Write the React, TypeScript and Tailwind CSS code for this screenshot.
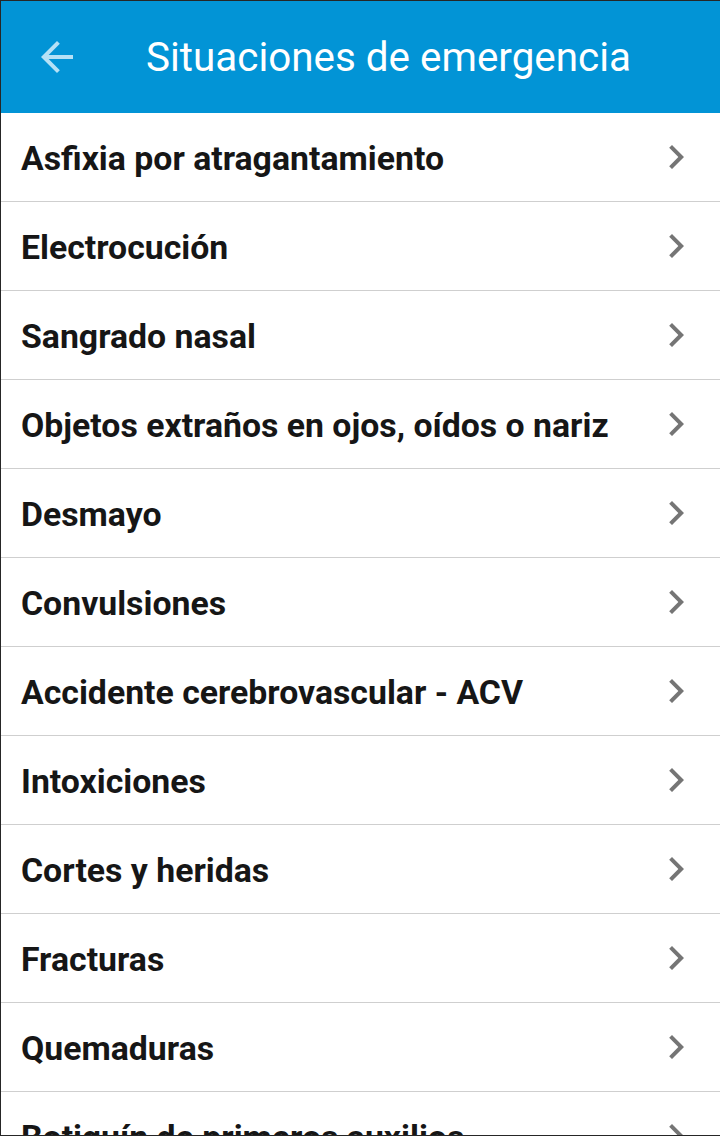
const ITEMS = [
  'Asfixia por atragantamiento',
  'Electrocución',
  'Sangrado nasal',
  'Objetos extraños en ojos, oídos o nariz',
  'Desmayo',
  'Convulsiones',
  'Accidente cerebrovascular - ACV',
  'Intoxiciones',
  'Cortes y heridas',
  'Fracturas',
  'Quemaduras',
  'Botiquín de primeros auxilios',
]

function BackArrow() {
  return (
    <svg viewBox="0 0 24 24" className="w-12 h-12" fill="#b5e1f6">
      <path d="M20 11H7.83l5.59-5.59L12 4l-8 8 8 8 1.41-1.41L7.83 13H20v-2z" />
    </svg>
  )
}

function Chevron() {
  return (
    <svg viewBox="0 0 24 24" className="w-12 h-12 shrink-0" fill="#757575">
      <path d="M10 6L8.59 7.41 13.17 12l-4.58 4.59L10 18l6-6z" />
    </svg>
  )
}

export default function App() {
  return (
    <div
      className="h-[1136px] w-[720px] overflow-hidden bg-white border-t border-b border-l border-[#262626] flex flex-col"
      style={{ fontFamily: 'Roboto, "Liberation Sans", sans-serif' }}
    >
      {/* Toolbar */}
      <header className="h-[112px] shrink-0 bg-[#0294d6] flex items-center pl-[32px] pr-4">
        <BackArrow />
        <h1 className="ml-[65px] mt-[3px] text-white text-[40.4px] font-normal leading-none">
          Situaciones de emergencia
        </h1>
      </header>

      {/* List */}
      <ul className="flex-1">
        {ITEMS.map((item) => (
          <li
            key={item}
            className="h-[89px] shrink-0 border-b border-[#cfcfcf] flex items-center justify-between pl-[20px] pr-[20px]"
          >
            <span className="mt-[3px] text-[33.8px] font-bold text-[#161616] leading-none whitespace-nowrap">
              {item}
            </span>
            <Chevron />
          </li>
        ))}
      </ul>
    </div>
  )
}
